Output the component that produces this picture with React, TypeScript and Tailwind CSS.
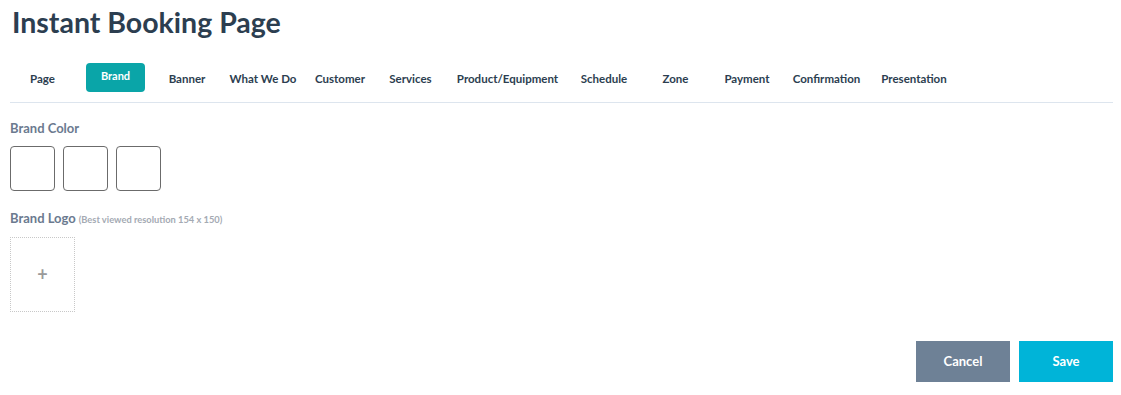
import React from 'react';

const tabs: { label: string; w: string }[] = [
  { label: 'Page', w: 'w-[61px]' },
  { label: 'Brand', w: 'w-[59px]' },
  { label: 'Banner', w: 'w-[84px]' },
  { label: 'What We Do', w: 'w-[68px]' },
  { label: 'Customer', w: 'w-[86px]' },
  { label: 'Services', w: 'w-[55px]' },
  { label: 'Product/Equipment', w: 'w-[139px]' },
  { label: 'Schedule', w: 'w-[54px]' },
  { label: 'Zone', w: 'w-[89px]' },
  { label: 'Payment', w: 'w-[54px]' },
  { label: 'Confirmation', w: 'w-[105px]' },
  { label: 'Presentation', w: 'w-[70px]' },
];

export default function App() {
  return (
    <div className="min-h-[395px] bg-white pl-[10px] pr-[8px] font-['Lato','Noto_Sans',sans-serif]">
      <h1 className="pt-[4px] pl-[2px] text-[28.5px] font-bold leading-[36px] text-[#2c3e50]">
        Instant Booking Page
      </h1>

      {/* tabs */}
      <div className="mt-[23px] flex items-center border-b border-[#dde5ee] pb-[10px] pl-[2px]">
        {tabs.map((t) =>
          t.label === 'Brand' ? (
            <button
              key={t.label}
              className={`${t.w} ml-[13px] h-[29px] rounded-[4px] bg-[#0aa5a8] text-[11px] font-bold text-white`}
            >
              <span className="relative -top-[1px]">Brand</span>
            </button>
          ) : (
            <div
              key={t.label}
              className={`${t.w} shrink-0 whitespace-nowrap pt-[3px] text-center text-[11.5px] font-bold text-[#2c3e50]`}
            >
              {t.label}
            </div>
          )
        )}
      </div>

      {/* brand color */}
      <div className="mt-[16px] text-[13px] font-bold text-[#6b7a8f]">Brand Color</div>
      <div className="mt-[7px] flex gap-[8px]">
        {[0, 1, 2].map((i) => (
          <div key={i} className="h-[45px] w-[45px] rounded-[4px] border border-[#6b6b6b]" />
        ))}
      </div>

      {/* brand logo */}
      <div className="mt-[18px] flex items-baseline gap-[3px]">
        <span className="text-[13px] font-bold text-[#6b7a8f]">Brand Logo</span>
        <span className="text-[9.3px] font-bold text-[#a4aab3]">(Best viewed resolution 154 x 150)</span>
      </div>
      <div className="mt-[9px] flex h-[75px] w-[65px] items-center justify-center border border-dotted border-[#c8c8c8] text-[18px] font-bold text-[#9a9a9a]">
        +
      </div>

      {/* actions */}
      <div className="mt-[29px] flex justify-end gap-[9px]">
        <button className="h-[41px] w-[94px] bg-[#6e8196] text-[13px] font-bold text-white">Cancel</button>
        <button className="h-[41px] w-[94px] bg-[#00b4d8] text-[13px] font-bold text-white">Save</button>
      </div>
    </div>
  );
}
